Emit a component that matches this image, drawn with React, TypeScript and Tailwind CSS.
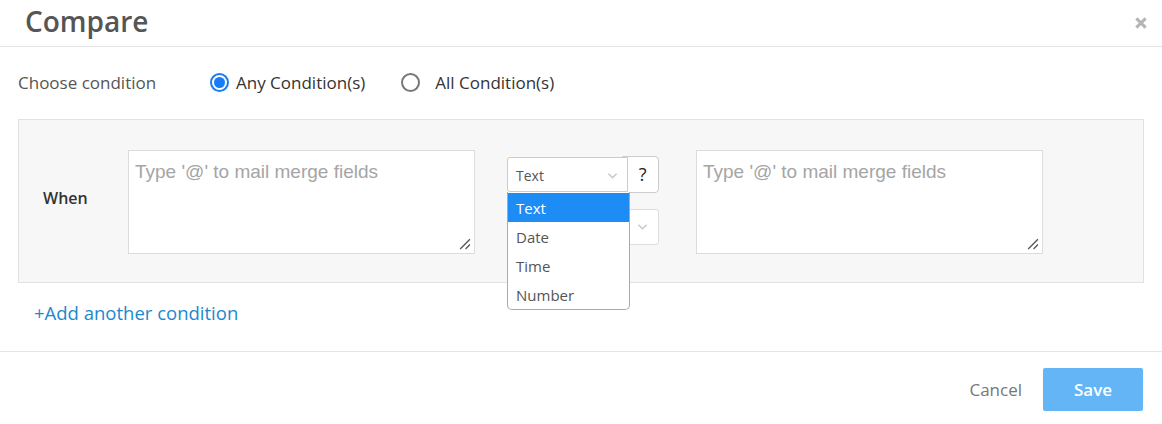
import { useState } from "react";

const ui = "font-['Open_Sans','Noto_Sans',sans-serif]";
const typeOptions = ["Text", "Date", "Time", "Number"];

function Chevron({ className }: { className?: string }) {
  return (
    <svg viewBox="0 0 12 8" className={className} fill="none">
      <path d="M1.5 1.5 6 6l4.5-4.5" stroke="currentColor" strokeWidth="1.6" />
    </svg>
  );
}

function Radio({ checked }: { checked: boolean }) {
  return (
    <span
      className={`flex h-[19px] w-[19px] items-center justify-center rounded-full border-2 ${
        checked ? "border-[#1a7cf5]" : "border-[#777]"
      }`}
    >
      {checked && <span className="h-[11px] w-[11px] rounded-full bg-[#1a7cf5]" />}
    </span>
  );
}

function MergeField() {
  return (
    <div className="relative h-[104px] w-[347px] border border-[#dcdcdc] bg-white">
      <textarea
        className="h-full w-full resize-none bg-transparent px-[6px] py-[9px] font-['Liberation_Sans',Arial,sans-serif] text-[19px] leading-[23px] text-[#333] outline-none placeholder:text-[#a5a5a5]"
        placeholder="Type '@' to mail merge fields"
      />
      <svg viewBox="0 0 12 12" className="pointer-events-none absolute bottom-[3px] right-[3px] h-[13px] w-[13px]">
        <path d="M11 2 2 11M11 7 7 11" stroke="#555" strokeWidth="1.2" />
      </svg>
    </div>
  );
}

export default function App() {
  const [mode, setMode] = useState<"any" | "all">("any");
  const [selected, setSelected] = useState("Text");

  return (
    <div className={`${ui} h-[424px] w-[1162px] bg-white text-[#555]`}>
      {/* header */}
      <div className="flex h-[47px] items-center justify-between border-b border-[#e5e5e5] pl-[25px] pr-[14px]">
        <h1 className="pb-[4px] text-[28px] font-semibold text-[#555]">Compare</h1>
        <svg viewBox="0 0 12 12" className="mb-[1px] h-[14px] w-[14px]">
          <path d="M2 2l8 8M10 2l-8 8" stroke="#b5b5b5" strokeWidth="2.6" />
        </svg>
      </div>

      <div className="px-[18px]">
        {/* condition mode */}
        <div className="flex h-[72px] items-center pb-[1px] text-[17px]">
          <span className="w-[192px] text-[#555]">Choose condition</span>
          <label className="flex cursor-pointer items-center gap-[7px] text-[#333]" onClick={() => setMode("any")}>
            <Radio checked={mode === "any"} />
            <span>Any Condition(s)</span>
          </label>
          <label className="ml-[36px] flex cursor-pointer items-center gap-[15px] text-[#333]" onClick={() => setMode("all")}>
            <Radio checked={mode === "all"} />
            <span>All Condition(s)</span>
          </label>
        </div>

        {/* condition row */}
        <div className="flex h-[164px] items-center border border-[#e2e2e2] bg-[#f7f7f7] pt-[1px]">
          <span className="mb-[8px] w-[109px] pl-[24px] text-[16px] font-semibold text-[#333]">When</span>
          <MergeField />

          <div className="relative ml-[32px] mr-[37px] flex h-[104px] w-[152px] flex-col gap-[15px] pt-[7px]">
            <div className="flex">
              <div className="relative z-10 flex h-[35px] w-[122px] items-center justify-between rounded-l-[3px] border border-[#f7c08d] bg-white pl-[8px] pr-[9px] pt-[3px] text-[14px] text-[#555]">
                <span>{selected}</span>
                <Chevron className="h-[8px] w-[11px] text-[#c8c8c8]" />
              </div>
              <button className="-ml-[6px] flex h-[37px] w-[37px] -translate-y-[1px] items-center justify-center rounded-r-[4px] border border-[#ccc] bg-white pl-[4px] text-[18px] text-[#222]">
                ?
              </button>
            </div>
            <div className="flex h-[36px] w-[152px] items-center justify-end rounded-[3px] border border-[#ddd] bg-white pr-[10px]">
              <Chevron className="h-[8px] w-[11px] text-[#c8c8c8]" />
            </div>

            {/* open type list */}
            <ul className="absolute left-0 top-[42px] z-20 w-[123px] overflow-hidden rounded-b-[5px] border border-[#aaa] border-t-0 bg-white pt-[1px] text-[15px]">
              {typeOptions.map((opt) => (
                <li
                  key={opt}
                  onClick={() => setSelected(opt)}
                  className={`flex h-[29px] items-center px-[8px] pt-[3px] ${
                    opt === selected ? "bg-[#1e8cf5] text-white" : "text-[#555]"
                  }`}
                >
                  {opt}
                </li>
              ))}
            </ul>
          </div>

          <MergeField />
        </div>

        <button className="ml-[16px] mt-[16px] text-[18.5px] text-[#1b88cf]">+Add another condition</button>
      </div>

      {/* footer */}
      <div className="mt-[24px] flex h-[73px] items-center justify-end gap-[21px] border-t border-[#e5e5e5] pr-[19px] pt-[4px]">
        <button className="text-[17px] text-[#777]">Cancel</button>
        <button className="h-[43px] w-[100px] rounded-[2px] bg-[#64b5f6] text-[17px] font-semibold text-white">Save</button>
      </div>
    </div>
  );
}
